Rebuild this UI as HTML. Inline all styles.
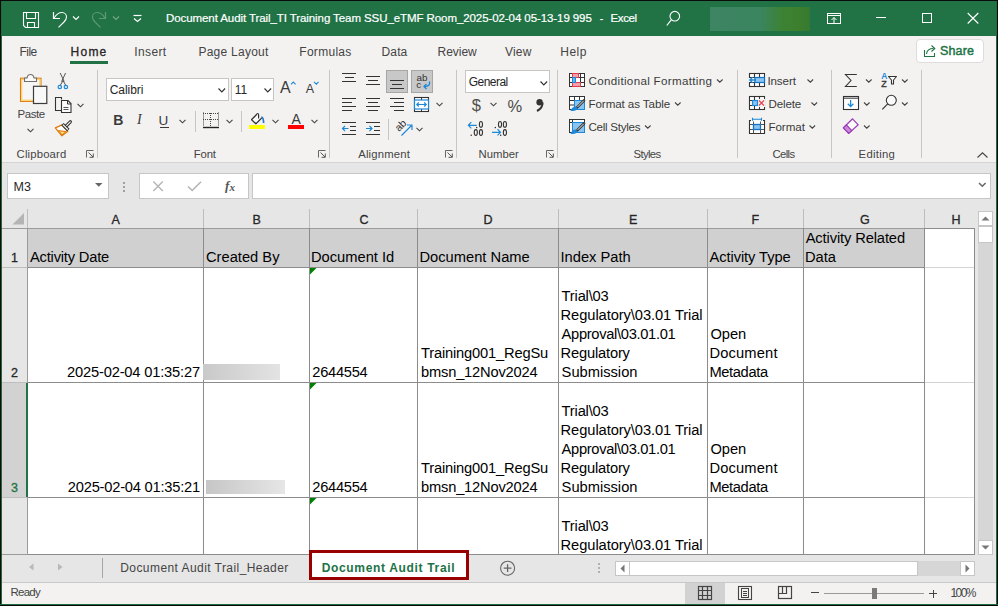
<!DOCTYPE html>
<html><head><meta charset="utf-8"><title>Excel</title>
<style>
*{margin:0;padding:0;box-sizing:border-box}
html,body{width:998px;height:606px;overflow:hidden;background:#f3f2f1;font-family:"Liberation Sans",sans-serif;position:relative}
.a{position:absolute;display:block}
.t{position:absolute;white-space:pre}
.c{-webkit-text-stroke:0.25px #000}
</style></head><body>
<div class="a" style="left:0px;top:0px;width:998px;height:36px;background:#217346;"></div>
<div class="a" style="left:0px;top:0px;width:998px;height:1px;background:#0b0b0b;"></div>
<div class="a" style="left:710px;top:7px;width:100px;height:24px;background:linear-gradient(90deg,#3e8563 0%,#3b8560 50%,#3a8450 58%,#3d8234 72%,#3c7f2e 88%,#367a31 100%);"></div>
<div class="a" style="left:70px;top:61px;width:38px;height:3px;background:#217346;"></div>
<div class="a" style="left:916px;top:39px;width:68px;height:24px;background:#ffffff;border:1px solid #dedcda;border-radius:4px"></div>
<div class="a" style="left:2px;top:162px;width:994px;height:1px;background:#d4d4d4;"></div>
<div class="a" style="left:97px;top:70px;width:1px;height:88px;background:#c8c6c4;"></div>
<div class="a" style="left:329px;top:70px;width:1px;height:88px;background:#c8c6c4;"></div>
<div class="a" style="left:456px;top:70px;width:1px;height:88px;background:#c8c6c4;"></div>
<div class="a" style="left:557px;top:70px;width:1px;height:88px;background:#c8c6c4;"></div>
<div class="a" style="left:737px;top:70px;width:1px;height:88px;background:#c8c6c4;"></div>
<div class="a" style="left:831px;top:70px;width:1px;height:88px;background:#c8c6c4;"></div>
<div class="a" style="left:921px;top:70px;width:1px;height:88px;background:#c8c6c4;"></div>
<div class="a" style="left:106px;top:78px;width:123px;height:23px;background:#ffffff;border:1px solid #c8c6c4;"></div>
<div class="a" style="left:231px;top:78px;width:43px;height:23px;background:#ffffff;border:1px solid #c8c6c4;"></div>
<div class="a" style="left:465px;top:70px;width:85px;height:23px;background:#ffffff;border:1px solid #c8c6c4;"></div>
<div class="a" style="left:2px;top:163px;width:994px;height:392px;background:#e6e6e6;"></div>
<div class="a" style="left:7px;top:173px;width:102px;height:26px;background:#ffffff;border:1px solid #c6c6c6;"></div>
<div class="a" style="left:139px;top:173px;width:110px;height:26px;background:#ffffff;border:1px solid #c6c6c6;"></div>
<div class="a" style="left:252px;top:173px;width:739px;height:26px;background:#ffffff;border:1px solid #c6c6c6;"></div>
<div class="a" style="left:27px;top:209px;width:1px;height:19px;background:#bdbdbd;"></div>
<div class="a" style="left:203px;top:209px;width:1px;height:19px;background:#bdbdbd;"></div>
<div class="a" style="left:309px;top:209px;width:1px;height:19px;background:#bdbdbd;"></div>
<div class="a" style="left:417px;top:209px;width:1px;height:19px;background:#bdbdbd;"></div>
<div class="a" style="left:558px;top:209px;width:1px;height:19px;background:#bdbdbd;"></div>
<div class="a" style="left:707px;top:209px;width:1px;height:19px;background:#bdbdbd;"></div>
<div class="a" style="left:803px;top:209px;width:1px;height:19px;background:#bdbdbd;"></div>
<div class="a" style="left:924px;top:209px;width:1px;height:19px;background:#bdbdbd;"></div>
<div class="a" style="left:2px;top:229px;width:25px;height:325px;background:#e6e6e6;"></div>
<div class="a" style="left:2px;top:383px;width:24px;height:114px;background:#d2d2d2;"></div>
<div class="a" style="left:28px;top:229px;width:946px;height:325px;background:#ffffff;"></div>
<div class="a" style="left:28px;top:229px;width:896px;height:38px;background:#d0d0d0;"></div>
<div class="a" style="left:925px;top:267px;width:49px;height:1px;background:#d4d4d4;"></div>
<div class="a" style="left:925px;top:382px;width:49px;height:1px;background:#d4d4d4;"></div>
<div class="a" style="left:925px;top:497px;width:49px;height:1px;background:#d4d4d4;"></div>
<div class="a" style="left:2px;top:228px;width:973px;height:1px;background:#9b9b9b;"></div>
<div class="a" style="left:2px;top:267px;width:25px;height:1px;background:#bdbdbd;"></div>
<div class="a" style="left:2px;top:382px;width:25px;height:1px;background:#bdbdbd;"></div>
<div class="a" style="left:2px;top:497px;width:25px;height:1px;background:#bdbdbd;"></div>
<div class="a" style="left:2px;top:554px;width:25px;height:1px;background:#9b9b9b;"></div>
<div class="a" style="left:27px;top:267px;width:898px;height:1px;background:#8c8c8c;"></div>
<div class="a" style="left:27px;top:382px;width:898px;height:1px;background:#8c8c8c;"></div>
<div class="a" style="left:27px;top:497px;width:898px;height:1px;background:#8c8c8c;"></div>
<div class="a" style="left:27px;top:554px;width:898px;height:1px;background:#8c8c8c;"></div>
<div class="a" style="left:924px;top:554px;width:51px;height:1px;background:#8c8c8c;"></div>
<div class="a" style="left:203px;top:228px;width:1px;height:327px;background:#8c8c8c;"></div>
<div class="a" style="left:309px;top:228px;width:1px;height:327px;background:#8c8c8c;"></div>
<div class="a" style="left:417px;top:228px;width:1px;height:327px;background:#8c8c8c;"></div>
<div class="a" style="left:558px;top:228px;width:1px;height:327px;background:#8c8c8c;"></div>
<div class="a" style="left:707px;top:228px;width:1px;height:327px;background:#8c8c8c;"></div>
<div class="a" style="left:803px;top:228px;width:1px;height:327px;background:#8c8c8c;"></div>
<div class="a" style="left:924px;top:228px;width:1px;height:327px;background:#8c8c8c;"></div>
<div class="a" style="left:27px;top:228px;width:1px;height:327px;background:#9b9b9b;"></div>
<div class="a" style="left:974px;top:229px;width:1px;height:326px;background:#8c8c8c;"></div>
<div class="a" style="left:924px;top:228px;width:51px;height:1px;background:#8c8c8c;"></div>
<div class="a" style="left:26px;top:383px;width:2px;height:114px;background:#217346;"></div>
<svg class="a" style="left:310px;top:268px;" width="7" height="7" viewBox="0 0 7 7"><path d="M0 0H6.5L0 6.5Z" fill="#008000"/></svg>
<svg class="a" style="left:310px;top:383px;" width="7" height="7" viewBox="0 0 7 7"><path d="M0 0H6.5L0 6.5Z" fill="#008000"/></svg>
<svg class="a" style="left:310px;top:498px;" width="7" height="7" viewBox="0 0 7 7"><path d="M0 0H6.5L0 6.5Z" fill="#008000"/></svg>
<div class="a" style="left:975px;top:209px;width:21px;height:346px;background:#e6e6e6;"></div>
<div class="a" style="left:978px;top:227px;width:15px;height:314px;background:#d6d6d6;"></div>
<div class="a" style="left:978px;top:211px;width:15px;height:15px;background:#ffffff;border:1px solid #c6c6c6;"></div>
<div class="a" style="left:978px;top:226px;width:15px;height:17px;background:#ffffff;border:1px solid #c6c6c6;"></div>
<div class="a" style="left:978px;top:540px;width:15px;height:15px;background:#ffffff;border:1px solid #c6c6c6;"></div>
<div class="a" style="left:2px;top:555px;width:994px;height:27px;background:#e6e6e6;"></div>
<div class="a" style="left:102px;top:558px;width:1px;height:20px;background:#a6a6a6;"></div>
<div class="a" style="left:309px;top:550px;width:160px;height:30px;background:#990000;"></div>
<div class="a" style="left:312px;top:553px;width:154px;height:24px;background:#ffffff;"></div>
<div class="a" style="left:598px;top:563px;width:2px;height:2px;background:#b0b0b0;"></div>
<div class="a" style="left:598px;top:567px;width:2px;height:2px;background:#b0b0b0;"></div>
<div class="a" style="left:598px;top:571px;width:2px;height:2px;background:#b0b0b0;"></div>
<div class="a" style="left:918px;top:561px;width:43px;height:15px;background:#d6d6d6;"></div>
<div class="a" style="left:615px;top:561px;width:15px;height:15px;background:#ffffff;border:1px solid #c6c6c6;"></div>
<div class="a" style="left:629px;top:561px;width:289px;height:15px;background:#ffffff;border:1px solid #c6c6c6;"></div>
<div class="a" style="left:960px;top:561px;width:15px;height:15px;background:#ffffff;border:1px solid #c6c6c6;"></div>
<div class="a" style="left:2px;top:582px;width:994px;height:1px;background:#c8c8c8;"></div>
<div class="a" style="left:2px;top:583px;width:994px;height:21px;background:#f3f2f1;"></div>
<div class="a" style="left:685px;top:583px;width:40px;height:21px;background:#d2d2d2;"></div>
<div class="a" style="left:824px;top:593px;width:100px;height:1px;background:#9a9a9a;"></div>
<div class="a" style="left:872px;top:588px;width:5px;height:11px;background:#7a7a7a;"></div>
<div class="a" style="left:811px;top:592px;width:8px;height:1px;background:#444;"></div>
<div class="a" style="left:929px;top:593px;width:8px;height:1px;background:#444;"></div>
<div class="a" style="left:932.5px;top:589.5px;width:1px;height:8px;background:#444;"></div>
<svg class="a" style="left:20px;top:10px;" width="22" height="22" viewBox="0 0 22 22"><path d="M3.5 2.5H18.5V17.5H5.5L3.5 15.5Z M6.5 2.5V8.5H15.5V2.5 M7.5 17.5V12.5H14.5V17.5" fill="none" stroke="#fff" stroke-width="1.1"/></svg>
<svg class="a" style="left:50px;top:10px;" width="22" height="22" viewBox="0 0 22 22"><path d="M3.5 2V8.5H10" fill="none" stroke="#fff" stroke-width="1.2"/><path d="M4 8.2Q7.5 2.5 12 2.5C15 2.5 16.5 5 16.5 7C16.5 9 15.5 10.5 14 12L8.5 17.4" fill="none" stroke="#fff" stroke-width="1.1"/></svg>
<svg class="a" style="left:72px;top:15px;" width="9" height="6" viewBox="0 0 9 6"><path d="M1 1.5L4 4.5L7 1.5" fill="none" stroke="#fff" stroke-width="1.1"/></svg>
<svg class="a" style="left:87px;top:10px;" width="22" height="22" viewBox="0 0 22 22"><g transform="translate(22,0) scale(-1,1)"><path d="M3.5 2V8.5H10" fill="none" stroke="#5f9a78" stroke-width="1.2"/><path d="M4 8.2Q7.5 2.5 12 2.5C15 2.5 16.5 5 16.5 7C16.5 9 15.5 10.5 14 12L8.5 17.4" fill="none" stroke="#5f9a78" stroke-width="1.1"/></g></svg>
<svg class="a" style="left:112px;top:15px;" width="9" height="6" viewBox="0 0 9 6"><path d="M1 1.5L4 4.5L7 1.5" fill="none" stroke="#76a88b" stroke-width="1.1"/></svg>
<svg class="a" style="left:131px;top:13px;" width="12" height="11" viewBox="0 0 12 11"><path d="M2.5 2.5H10.5" stroke="#fff" stroke-width="1.2"/><path d="M3 5.5L6.5 8.5L10 5.5" fill="none" stroke="#fff" stroke-width="1.2"/></svg>
<svg class="a" style="left:664px;top:8px;" width="18" height="20" viewBox="0 0 18 20"><circle cx="10.8" cy="8.2" r="4.8" fill="none" stroke="#fff" stroke-width="1.1"/><path d="M7.3 11.8L2.8 17.5" stroke="#fff" stroke-width="1.2"/></svg>
<svg class="a" style="left:826px;top:11px;" width="17" height="14" viewBox="0 0 17 14"><rect x="1.5" y="2.5" width="13" height="10" fill="none" stroke="#fff" stroke-width="1"/><path d="M1.5 4.5H14.5" stroke="#fff" stroke-width="1"/><path d="M8 12V6.5 M5.5 9L8 6.5L10.5 9" fill="none" stroke="#fff" stroke-width="1"/></svg>
<svg class="a" style="left:875px;top:15px;" width="12" height="5" viewBox="0 0 12 5"><path d="M1 2.5H11" stroke="#fff" stroke-width="1"/></svg>
<svg class="a" style="left:920px;top:11px;" width="14" height="14" viewBox="0 0 14 14"><rect x="2.5" y="2.5" width="9" height="9" fill="none" stroke="#fff" stroke-width="1"/></svg>
<svg class="a" style="left:966px;top:11px;" width="14" height="14" viewBox="0 0 14 14"><path d="M1.7 2L12.3 12.5M12.3 2L1.7 12.5" stroke="#fff" stroke-width="1.1"/></svg>
<svg class="a" style="left:922px;top:43px;" width="16" height="16" viewBox="0 0 16 16"><path d="M2.5 7V13.5H12.5V10" fill="none" stroke="#217346" stroke-width="1.1"/><path d="M4.5 11C5 6.5 8 5.5 11.5 5.5" fill="none" stroke="#217346" stroke-width="1.1"/><path d="M9.5 2.5L12.8 5.5L9.5 8.5" fill="none" stroke="#217346" stroke-width="1.1"/></svg>
<svg class="a" style="left:14px;top:70px;" width="36" height="36" viewBox="0 0 36 36"><rect x="6.5" y="8.2" width="20.5" height="23.2" fill="#f6f6f6" stroke="#e07a10" stroke-width="1.1"/><rect x="7.7" y="9.4" width="18.1" height="20.8" fill="none" stroke="#fbd46c" stroke-width="1.2"/><path d="M10.5 11.5V8H13Q13.5 4.5 16.5 4.5Q19.5 4.5 20 8H22.5V11.5Z" fill="#fafafa" stroke="#6f6f6f" stroke-width="1.1"/><rect x="19.5" y="16.3" width="13.3" height="17.2" fill="#f8f8f8" stroke="#3c3c3c" stroke-width="1.2"/></svg>
<svg class="a" style="left:26px;top:127px;" width="9" height="7" viewBox="0 0 9 7"><path d="M1.5 1.8L4.5 4.8L7.5 1.8" fill="none" stroke="#444" stroke-width="1.1"/></svg>
<svg class="a" style="left:56px;top:72px;" width="14" height="18" viewBox="0 0 14 18"><path d="M4.2 1L8.2 9.5M9.6 1L5.6 9.5M7 8.5L4.3 13.3M7 8.5L9.7 13.3" stroke="#555" stroke-width="1" fill="none"/><circle cx="3.8" cy="15" r="1.7" fill="none" stroke="#1e88d8" stroke-width="1.2"/><circle cx="9.9" cy="15" r="1.7" fill="none" stroke="#1e88d8" stroke-width="1.2"/></svg>
<svg class="a" style="left:54px;top:96px;" width="20" height="18" viewBox="0 0 20 18"><path d="M7.5 3.5V1.5H1.5V14.5H7" fill="none" stroke="#333" stroke-width="1.1"/><path d="M7.5 4.5H14L17 7.5V16.5H7.5Z" fill="#fafafa" stroke="#333" stroke-width="1.1"/><path d="M13.5 4.5V8H17" fill="none" stroke="#333" stroke-width="1"/><path d="M9.5 11.5H14.5M9.5 13.5H14.5" stroke="#555" stroke-width="1"/></svg>
<svg class="a" style="left:76px;top:102px;" width="9" height="7" viewBox="0 0 9 7"><path d="M1.5 1.8L4.5 4.8L7.5 1.8" fill="none" stroke="#444" stroke-width="1.1"/></svg>
<svg class="a" style="left:52px;top:118px;" width="22" height="20" viewBox="0 0 22 20"><path d="M3.3 9.9L10 6.8L15.8 13.2L9.9 17.8Z" fill="#fff" stroke="#e07a10" stroke-width="1.3" stroke-linejoin="round"/><path d="M6.5 12.6L14 13.6L10 17Z" fill="#fbd46c" stroke="#e07a10" stroke-width="1"/><path d="M13.6 8.7L18.3 3.8" stroke="#333" stroke-width="3.3" stroke-linecap="round"/><path d="M13.6 8.7L18.3 3.8" stroke="#fff" stroke-width="1.1" stroke-linecap="round"/><path d="M10.4 6.1L16.3 12" stroke="#333" stroke-width="3.4"/><path d="M10.9 6.6L15.8 11.5" stroke="#fff" stroke-width="1.2"/></svg>
<svg class="a" style="left:85px;top:149px;" width="10" height="10" viewBox="0 0 10 10"><path d="M1.5 8.5V1.5H8.5" fill="none" stroke="#666" stroke-width="1"/><path d="M3.5 3.5L8 8M8.3 4.5V8.3H4.5" fill="none" stroke="#555" stroke-width="1"/></svg>
<svg class="a" style="left:317px;top:149px;" width="10" height="10" viewBox="0 0 10 10"><path d="M1.5 8.5V1.5H8.5" fill="none" stroke="#666" stroke-width="1"/><path d="M3.5 3.5L8 8M8.3 4.5V8.3H4.5" fill="none" stroke="#555" stroke-width="1"/></svg>
<svg class="a" style="left:444px;top:149px;" width="10" height="10" viewBox="0 0 10 10"><path d="M1.5 8.5V1.5H8.5" fill="none" stroke="#666" stroke-width="1"/><path d="M3.5 3.5L8 8M8.3 4.5V8.3H4.5" fill="none" stroke="#555" stroke-width="1"/></svg>
<svg class="a" style="left:545px;top:149px;" width="10" height="10" viewBox="0 0 10 10"><path d="M1.5 8.5V1.5H8.5" fill="none" stroke="#666" stroke-width="1"/><path d="M3.5 3.5L8 8M8.3 4.5V8.3H4.5" fill="none" stroke="#555" stroke-width="1"/></svg>
<svg class="a" style="left:216px;top:85px;" width="12" height="10" viewBox="0 0 12 10"><path d="M2.5 3.5L5.8 6.8L9.1 3.5" fill="none" stroke="#333" stroke-width="1.2"/></svg>
<svg class="a" style="left:262px;top:85px;" width="12" height="10" viewBox="0 0 12 10"><path d="M2.5 3.5L5.8 6.8L9.1 3.5" fill="none" stroke="#333" stroke-width="1.2"/></svg>
<svg class="a" style="left:290px;top:80px;" width="7" height="6" viewBox="0 0 7 6"><path d="M1 4.3L3.3 2L5.6 4.3" fill="none" stroke="#1e88d8" stroke-width="1.1"/></svg>
<svg class="a" style="left:313px;top:80px;" width="7" height="6" viewBox="0 0 7 6"><path d="M1 1.8L3.3 4.1L5.6 1.8" fill="none" stroke="#1e88d8" stroke-width="1.1"/></svg>
<div class="a" style="left:159.6px;top:126.5px;width:9.6px;height:1px;background:#3a3a3a;"></div>
<svg class="a" style="left:178px;top:118px;" width="9" height="7" viewBox="0 0 9 7"><path d="M1.5 1.8L4.5 4.8L7.5 1.8" fill="none" stroke="#444" stroke-width="1.1"/></svg>
<svg class="a" style="left:224.5px;top:118px;" width="9" height="7" viewBox="0 0 9 7"><path d="M1.5 1.8L4.5 4.8L7.5 1.8" fill="none" stroke="#444" stroke-width="1.1"/></svg>
<svg class="a" style="left:271px;top:118px;" width="9" height="7" viewBox="0 0 9 7"><path d="M1.5 1.8L4.5 4.8L7.5 1.8" fill="none" stroke="#444" stroke-width="1.1"/></svg>
<svg class="a" style="left:309.5px;top:118px;" width="9" height="7" viewBox="0 0 9 7"><path d="M1.5 1.8L4.5 4.8L7.5 1.8" fill="none" stroke="#444" stroke-width="1.1"/></svg>
<div class="a" style="left:195px;top:111px;width:1px;height:21px;background:#c8c6c4;"></div>
<div class="a" style="left:241px;top:111px;width:1px;height:21px;background:#c8c6c4;"></div>
<svg class="a" style="left:202px;top:112px;" width="18" height="18" viewBox="0 0 18 18"><path d="M1.5 0.5V14.5M16.5 0.5V14.5M1 1.5H16.5M8.5 1V14.5M1 7.5H16.5" fill="none" stroke="#444" stroke-width="1" stroke-dasharray="1 1"/><path d="M1 15.5H17" stroke="#222" stroke-width="1.4"/></svg>
<svg class="a" style="left:248px;top:112px;" width="18" height="14" viewBox="0 0 18 14"><path d="M13.5 6.2L8 11.7L3.6 7.6L8.3 3" fill="#fafafa" stroke="#333" stroke-width="1.2" stroke-linejoin="round"/><path d="M8.3 3L13.5 6.2L8 11.7L3.6 7.6Z" fill="#fafafa"/><path d="M13.5 6.2L8 11.7L3.6 7.6L8.3 3" fill="none" stroke="#333" stroke-width="1.2" stroke-linejoin="round"/><path d="M10.6 6.6V3Q10.6 1.5 9.6 1.5Q8.8 1.5 8.3 3" fill="none" stroke="#333" stroke-width="1.2"/><path d="M13.3 5Q15.6 5.3 15.6 11" fill="none" stroke="#1e78c8" stroke-width="1.7"/></svg>
<div class="a" style="left:248.8px;top:125px;width:16.2px;height:4px;background:#ffff00;"></div>
<div class="a" style="left:288px;top:125px;width:16px;height:4px;background:#ff0000;"></div>
<div class="a" style="left:342.2px;top:73px;width:13.600000000000023px;height:1.1px;background:#333;"></div>
<div class="a" style="left:344.5px;top:77px;width:9.199999999999989px;height:1.1px;background:#333;"></div>
<div class="a" style="left:342.2px;top:81px;width:13.600000000000023px;height:1.1px;background:#333;"></div>
<div class="a" style="left:366.1px;top:76px;width:13.699999999999989px;height:1.1px;background:#333;"></div>
<div class="a" style="left:368.3px;top:80px;width:9.5px;height:1.1px;background:#333;"></div>
<div class="a" style="left:366.1px;top:84px;width:13.699999999999989px;height:1.1px;background:#333;"></div>
<div class="a" style="left:386px;top:70px;width:22px;height:23px;background:#c8c8c8;border:1px solid #a6a6a6;"></div>
<div class="a" style="left:390px;top:80px;width:13.899999999999977px;height:1.1px;background:#333;"></div>
<div class="a" style="left:392.4px;top:84px;width:9.5px;height:1.1px;background:#333;"></div>
<div class="a" style="left:390px;top:88px;width:13.899999999999977px;height:1.1px;background:#333;"></div>
<div class="a" style="left:411px;top:70px;width:22px;height:23px;background:#c8c8c8;border:1px solid #a6a6a6;"></div>
<svg class="a" style="left:420px;top:79px;" width="12" height="11" viewBox="0 0 12 11"><path d="M9.5 2.5Q10.5 7.5 4.5 7.5" fill="none" stroke="#1e88d8" stroke-width="1.3"/><path d="M6.5 5L4 7.5L6.5 10" fill="none" stroke="#1e88d8" stroke-width="1.3"/></svg>
<div class="a" style="left:342.2px;top:98px;width:13.600000000000023px;height:1.1px;background:#333;"></div>
<div class="a" style="left:342.2px;top:102px;width:9.800000000000011px;height:1.1px;background:#333;"></div>
<div class="a" style="left:342.2px;top:106px;width:13.600000000000023px;height:1.1px;background:#333;"></div>
<div class="a" style="left:342.2px;top:110px;width:9.800000000000011px;height:1.1px;background:#333;"></div>
<div class="a" style="left:366.1px;top:98px;width:13.699999999999989px;height:1.1px;background:#333;"></div>
<div class="a" style="left:367.9px;top:102px;width:10.200000000000045px;height:1.1px;background:#333;"></div>
<div class="a" style="left:366.1px;top:106px;width:13.699999999999989px;height:1.1px;background:#333;"></div>
<div class="a" style="left:367.9px;top:110px;width:10.200000000000045px;height:1.1px;background:#333;"></div>
<div class="a" style="left:390px;top:98px;width:13.899999999999977px;height:1.1px;background:#333;"></div>
<div class="a" style="left:394px;top:102px;width:9.899999999999977px;height:1.1px;background:#333;"></div>
<div class="a" style="left:390px;top:106px;width:13.899999999999977px;height:1.1px;background:#333;"></div>
<div class="a" style="left:394px;top:110px;width:9.899999999999977px;height:1.1px;background:#333;"></div>
<svg class="a" style="left:413px;top:96px;" width="17" height="17" viewBox="0 0 17 17"><rect x="1.5" y="1.5" width="14" height="14" fill="#fff" stroke="#333" stroke-width="1.1"/><path d="M8.5 1.5V15.5" stroke="#333" stroke-width="1"/><rect x="1.5" y="4" width="14" height="9" fill="#fff" stroke="#1e88d8" stroke-width="1.2"/><path d="M3.8 8.5H13.2M5.8 6.5L3.8 8.5L5.8 10.5M11.2 6.5L13.2 8.5L11.2 10.5" fill="none" stroke="#1e88d8" stroke-width="1.2"/></svg>
<svg class="a" style="left:435px;top:101px;" width="9" height="7" viewBox="0 0 9 7"><path d="M1.5 1.8L4.5 4.8L7.5 1.8" fill="none" stroke="#444" stroke-width="1.1"/></svg>
<div class="a" style="left:342.2px;top:122px;width:13.600000000000023px;height:1.1px;background:#333;"></div>
<div class="a" style="left:349.9px;top:126px;width:5.900000000000034px;height:1.1px;background:#333;"></div>
<div class="a" style="left:349.9px;top:130px;width:5.900000000000034px;height:1.1px;background:#333;"></div>
<div class="a" style="left:342.2px;top:134px;width:13.600000000000023px;height:1.1px;background:#333;"></div>
<div class="a" style="left:366.1px;top:122px;width:13.699999999999989px;height:1.1px;background:#333;"></div>
<div class="a" style="left:374.2px;top:126px;width:5.600000000000023px;height:1.1px;background:#333;"></div>
<div class="a" style="left:374.2px;top:130px;width:5.600000000000023px;height:1.1px;background:#333;"></div>
<div class="a" style="left:366.1px;top:134px;width:13.699999999999989px;height:1.1px;background:#333;"></div>
<svg class="a" style="left:341px;top:124px;" width="9" height="9" viewBox="0 0 9 9"><path d="M1.5 4.5H7.5M4 2L1.5 4.5L4 7" fill="none" stroke="#1e88d8" stroke-width="1.2"/></svg>
<svg class="a" style="left:365px;top:124px;" width="9" height="9" viewBox="0 0 9 9"><path d="M1 4.5H7M4.5 2L7 4.5L4.5 7" fill="none" stroke="#1e88d8" stroke-width="1.2"/></svg>
<div class="a" style="left:388px;top:119px;width:1px;height:21px;background:#c8c6c4;"></div>
<svg class="a" style="left:400px;top:122px;" width="14" height="15" viewBox="0 0 14 15"><path d="M1.5 13.5L11.5 3.5M7 3H12V8" fill="none" stroke="#1e88d8" stroke-width="1.2"/></svg>
<svg class="a" style="left:415px;top:126px;" width="9" height="7" viewBox="0 0 9 7"><path d="M1.5 1.8L4.5 4.8L7.5 1.8" fill="none" stroke="#444" stroke-width="1.1"/></svg>
<svg class="a" style="left:538px;top:78px;" width="12" height="10" viewBox="0 0 12 10"><path d="M2.5 3.5L5.8 6.8L9.1 3.5" fill="none" stroke="#333" stroke-width="1.2"/></svg>
<svg class="a" style="left:489px;top:101px;" width="9" height="7" viewBox="0 0 9 7"><path d="M1.5 1.8L4.5 4.8L7.5 1.8" fill="none" stroke="#444" stroke-width="1.1"/></svg>
<svg class="a" style="left:534px;top:98px;" width="11" height="15" viewBox="0 0 11 15"><circle cx="5.6" cy="4.2" r="3.2" fill="#333"/><path d="M8.6 4.5Q8.8 10 3 13" fill="none" stroke="#333" stroke-width="2"/></svg>
<svg class="a" style="left:462px;top:116px;" width="50" height="24" viewBox="0 0 50 24"><ellipse cx="18.94999999999999" cy="8.400000000000006" rx="1.55" ry="2.9" fill="none" stroke="#333" stroke-width="1.1"/><rect x="14" y="10.900000000000006" width="1.3" height="1.3" fill="#333"/><ellipse cx="13.800000000000011" cy="16.55000000000001" rx="1.55" ry="2.9" fill="none" stroke="#333" stroke-width="1.1"/><ellipse cx="18.94999999999999" cy="16.55000000000001" rx="1.55" ry="2.9" fill="none" stroke="#333" stroke-width="1.1"/><rect x="8.600000000000023" y="18.599999999999994" width="1.3" height="1.3" fill="#333"/><ellipse cx="38" cy="8.400000000000006" rx="1.55" ry="2.9" fill="none" stroke="#333" stroke-width="1.1"/><ellipse cx="42.89999999999998" cy="8.400000000000006" rx="1.55" ry="2.9" fill="none" stroke="#333" stroke-width="1.1"/><rect x="32.69999999999999" y="10.900000000000006" width="1.3" height="1.3" fill="#333"/><ellipse cx="42.89999999999998" cy="16.55000000000001" rx="1.55" ry="2.9" fill="none" stroke="#333" stroke-width="1.1"/><rect x="38" y="18.599999999999994" width="1.3" height="1.3" fill="#333"/><path d="M6.3 9.3H14.8M9.3 6.2L6.3 9.3L9.3 12.4" fill="none" stroke="#1e88d8" stroke-width="1.2"/><path d="M30 16.3H38.5M35.5 13.2L38.5 16.3L35.5 19.4" fill="none" stroke="#1e88d8" stroke-width="1.2"/></svg>
<svg class="a" style="left:568px;top:72px;" width="18" height="17" viewBox="0 0 18 17"><rect x="1.5" y="1.5" width="15" height="13" fill="#fff" stroke="#333" stroke-width="1"/><path d="M1.5 5.5H16.5M1.5 10.5H16.5M12.5 1.5V14.5M4.5 1.5V14.5" stroke="#333" stroke-width="1"/><rect x="4.5" y="1.5" width="6" height="4" fill="#f4a0a8" stroke="#e03c4c" stroke-width="1"/><rect x="4.5" y="10.5" width="8" height="4" fill="#f4a0a8" stroke="#e03c4c" stroke-width="1"/><rect x="4.5" y="5.5" width="3" height="5" fill="#6fb1ea" stroke="#1e88d8" stroke-width="1"/></svg>
<svg class="a" style="left:716px;top:78px;" width="8" height="6" viewBox="0 0 8 6"><path d="M1 1.5L3.8 4.2L6.6 1.5" fill="none" stroke="#444" stroke-width="1.1"/></svg>
<svg class="a" style="left:568px;top:95px;" width="18" height="17" viewBox="0 0 18 17"><rect x="1.5" y="1.5" width="15" height="13" fill="#fff" stroke="#333" stroke-width="1"/><path d="M1.5 5.5H16.5M1.5 10H16.5M6.5 1.5V14.5M11.5 1.5V14.5" stroke="#333" stroke-width="1"/><rect x="6.5" y="5.5" width="10" height="9" fill="#8cc4f0" stroke="#1e88d8" stroke-width="1"/><path d="M16 5.5L9.2 12.3" stroke="#333" stroke-width="2.6" stroke-linecap="round"/><path d="M15.8 5.7L9.6 11.9" stroke="#fff" stroke-width="0.9"/><path d="M2.5 15.8C3.5 13 5.5 11.3 8 11.6L9.3 13C9.2 15.5 6 16.6 2.5 15.8Z" fill="#1e88d8"/></svg>
<svg class="a" style="left:674px;top:101px;" width="8" height="6" viewBox="0 0 8 6"><path d="M1 1.5L3.8 4.2L6.6 1.5" fill="none" stroke="#444" stroke-width="1.1"/></svg>
<svg class="a" style="left:568px;top:118px;" width="18" height="17" viewBox="0 0 18 17"><rect x="1.5" y="1.5" width="15" height="13" fill="#fff" stroke="#333" stroke-width="1"/><path d="M1.5 4.5H16.5M4.5 1.5V14.5" stroke="#333" stroke-width="1"/><rect x="4.5" y="4.5" width="12" height="10" fill="#8cc4f0" stroke="#1e88d8" stroke-width="1"/><path d="M16 5.5L9.2 12.3" stroke="#333" stroke-width="2.6" stroke-linecap="round"/><path d="M15.8 5.7L9.6 11.9" stroke="#fff" stroke-width="0.9"/><path d="M2.5 15.8C3.5 13 5.5 11.3 8 11.6L9.3 13C9.2 15.5 6 16.6 2.5 15.8Z" fill="#1e88d8"/></svg>
<svg class="a" style="left:644px;top:124px;" width="8" height="6" viewBox="0 0 8 6"><path d="M1 1.5L3.8 4.2L6.6 1.5" fill="none" stroke="#444" stroke-width="1.1"/></svg>
<svg class="a" style="left:748px;top:72px;" width="18" height="16" viewBox="0 0 18 16"><rect x="1.5" y="1.5" width="15" height="13" fill="#fff" stroke="#333" stroke-width="1.1"/><path d="M6.5 1.5V14.5M11.5 1.5V14.5M1.5 5.5H16.5M1.5 10.5H16.5" stroke="#333" stroke-width="1.1"/><rect x="0.8" y="6" width="6" height="4" fill="#fff"/><rect x="7" y="5.5" width="9.5" height="5" fill="#8cc4f0" stroke="#1673c6" stroke-width="1.2"/><path d="M1.8 8H8M4.6 5.2L1.8 8L4.6 10.8" fill="none" stroke="#1e88d8" stroke-width="1.3"/></svg>
<svg class="a" style="left:806px;top:78px;" width="9" height="6" viewBox="0 0 9 6"><path d="M1.5 1.5L4.3 4.2L7.1 1.5" fill="none" stroke="#444" stroke-width="1.1"/></svg>
<svg class="a" style="left:748px;top:95px;" width="18" height="16" viewBox="0 0 18 16"><rect x="1.5" y="1.5" width="15" height="13" fill="#fff" stroke="#333" stroke-width="1.1"/><path d="M6.5 1.5V14.5M11.5 1.5V14.5M1.5 5.5H16.5M1.5 10.5H16.5" stroke="#333" stroke-width="1.1"/><rect x="10" y="4" width="7" height="8" fill="#f3f2f1"/><rect x="4.5" y="5.5" width="5" height="5" fill="#8cc4f0" stroke="#1e88d8" stroke-width="1.2"/><path d="M11 5.5L16 10.5M16 5.5L11 10.5" stroke="#e8434f" stroke-width="1.2"/></svg>
<svg class="a" style="left:810px;top:101px;" width="9" height="6" viewBox="0 0 9 6"><path d="M1.5 1.5L4.3 4.2L7.1 1.5" fill="none" stroke="#444" stroke-width="1.1"/></svg>
<svg class="a" style="left:748px;top:117px;" width="18" height="18" viewBox="0 0 18 18"><rect x="1.5" y="3.5" width="15" height="13" fill="#fff"/><path d="M5.5 4.5V16.5M12.5 4.5V16.5M1.5 7.5H16.5M1.5 12.5H16.5" stroke="#555" stroke-width="1"/><path d="M3 3.5H1.5V16.5H16.5V3.5H15" fill="none" stroke="#333" stroke-width="1.1"/><rect x="5.5" y="7.5" width="7" height="5" fill="#8cc4f0" stroke="#1673c6" stroke-width="1.3"/><path d="M4.3 2.3H13.7M4.5 0.8V3.8M13.5 0.8V3.8" stroke="#1e88d8" stroke-width="1.1"/></svg>
<svg class="a" style="left:808px;top:124px;" width="9" height="6" viewBox="0 0 9 6"><path d="M1.5 1.5L4.3 4.2L7.1 1.5" fill="none" stroke="#444" stroke-width="1.1"/></svg>
<svg class="a" style="left:843px;top:72px;" width="16" height="17" viewBox="0 0 16 17"><path d="M13.8 2.5H2.5L8 8.5L2.5 14.5H13.8" fill="none" stroke="#333" stroke-width="1.1"/></svg>
<svg class="a" style="left:865px;top:78px;" width="8" height="6" viewBox="0 0 8 6"><path d="M1 1.5L3.8 4.2L6.6 1.5" fill="none" stroke="#444" stroke-width="1.1"/></svg>
<svg class="a" style="left:887px;top:75px;" width="11" height="11" viewBox="0 0 11 11"><path d="M1.5 1.5H9.5L6.5 5V9H4.5V5Z" fill="#fff" stroke="#333" stroke-width="1.1" stroke-linejoin="round"/></svg>
<svg class="a" style="left:901px;top:78px;" width="8" height="6" viewBox="0 0 8 6"><path d="M1 1.5L3.8 4.2L6.6 1.5" fill="none" stroke="#444" stroke-width="1.1"/></svg>
<svg class="a" style="left:842px;top:95px;" width="18" height="16" viewBox="0 0 18 16"><rect x="1.5" y="1.5" width="15" height="13" fill="#fff" stroke="#333" stroke-width="1.1"/><path d="M1.5 3.2H16.5" stroke="#333" stroke-width="1"/><path d="M8.6 5V11.5M5.8 8.8L8.6 11.6L11.4 8.8" fill="none" stroke="#1e88d8" stroke-width="1.3"/></svg>
<svg class="a" style="left:863px;top:101px;" width="8" height="6" viewBox="0 0 8 6"><path d="M1 1.5L3.8 4.2L6.6 1.5" fill="none" stroke="#444" stroke-width="1.1"/></svg>
<svg class="a" style="left:880px;top:94px;" width="18" height="18" viewBox="0 0 18 18"><circle cx="11.3" cy="6.3" r="5" fill="#fafafa" stroke="#333" stroke-width="1.1"/><path d="M7.7 9.9L2.3 15.3" stroke="#333" stroke-width="1.2"/></svg>
<svg class="a" style="left:901px;top:101px;" width="8" height="6" viewBox="0 0 8 6"><path d="M1 1.5L3.8 4.2L6.6 1.5" fill="none" stroke="#444" stroke-width="1.1"/></svg>
<svg class="a" style="left:842px;top:117px;" width="18" height="18" viewBox="0 0 18 18"><path d="M10.6 1.8L16.2 7.8L6.7 16.4L1.4 10.8Z" fill="#fafafa" stroke="#9b3bb8" stroke-width="1.2" stroke-linejoin="round"/><path d="M1.4 10.8L4.4 7.8L9.8 13.6L6.7 16.4Z" fill="#c98ad9" stroke="#9b3bb8" stroke-width="1.2" stroke-linejoin="round"/></svg>
<svg class="a" style="left:863px;top:124px;" width="8" height="6" viewBox="0 0 8 6"><path d="M1 1.5L3.8 4.2L6.6 1.5" fill="none" stroke="#444" stroke-width="1.1"/></svg>
<svg class="a" style="left:976px;top:151px;" width="13" height="8" viewBox="0 0 13 8"><path d="M1.5 6.5L6.5 1.8L11.5 6.5" fill="none" stroke="#444" stroke-width="1.1"/></svg>
<svg class="a" style="left:94px;top:182px;" width="10" height="6" viewBox="0 0 10 6"><path d="M1 1H8.5L4.75 4.8Z" fill="#666"/></svg>
<div class="a" style="left:123px;top:181.5px;width:2px;height:2px;background:#a0a0a0;"></div>
<div class="a" style="left:123px;top:185.5px;width:2px;height:2px;background:#a0a0a0;"></div>
<div class="a" style="left:123px;top:189.5px;width:2px;height:2px;background:#a0a0a0;"></div>
<svg class="a" style="left:151px;top:179px;" width="14" height="14" viewBox="0 0 14 14"><path d="M2.3 2.5L11.8 12M11.8 2.5L2.3 12" stroke="#b4b4b4" stroke-width="1.3"/></svg>
<svg class="a" style="left:186px;top:179px;" width="17" height="14" viewBox="0 0 17 14"><path d="M2 7.5L6.2 11.5L15 2.8" fill="none" stroke="#b4b4b4" stroke-width="1.6"/></svg>
<svg class="a" style="left:977px;top:181px;" width="11" height="8" viewBox="0 0 11 8"><path d="M2 2L5.3 5.3L8.6 2" fill="none" stroke="#666" stroke-width="1.5"/></svg>
<svg class="a" style="left:12px;top:212px;" width="14" height="14" viewBox="0 0 14 14"><path d="M12 1V12.5H0.5Z" fill="#b4b4b4"/></svg>
<svg class="a" style="left:978px;top:211px;" width="15" height="15" viewBox="0 0 15 15"><path d="M3.5 9.5H11.5L7.5 5.5Z" fill="#777"/></svg>
<svg class="a" style="left:978px;top:540px;" width="15" height="15" viewBox="0 0 15 15"><path d="M3.5 5.5H11.5L7.5 9.5Z" fill="#777"/></svg>
<svg class="a" style="left:615px;top:561px;" width="15" height="15" viewBox="0 0 15 15"><path d="M9.5 3.5V11.5L5.5 7.5Z" fill="#777"/></svg>
<svg class="a" style="left:960px;top:561px;" width="15" height="15" viewBox="0 0 15 15"><path d="M5.5 3.5V11.5L9.5 7.5Z" fill="#777"/></svg>
<svg class="a" style="left:26px;top:561px;" width="10" height="12" viewBox="0 0 10 12"><path d="M7.5 2.5V9.5L3 6Z" fill="#b8b8b8"/></svg>
<svg class="a" style="left:55px;top:561px;" width="10" height="12" viewBox="0 0 10 12"><path d="M3 2.5V9.5L7.5 6Z" fill="#b8b8b8"/></svg>
<svg class="a" style="left:499px;top:559px;" width="19" height="19" viewBox="0 0 19 19"><circle cx="8.6" cy="9.2" r="7" fill="none" stroke="#666" stroke-width="1.1"/><path d="M8.6 5.3V13.1M4.7 9.2H12.5" stroke="#666" stroke-width="1.3"/></svg>
<svg class="a" style="left:697px;top:585px;" width="16" height="16" viewBox="0 0 16 16"><rect x="1.5" y="1.5" width="13" height="13" fill="none" stroke="#444" stroke-width="1.2"/><path d="M5.5 1.5V14.5M10.5 1.5V14.5M1.5 5.5H14.5M1.5 10.5H14.5" stroke="#444" stroke-width="1.2"/></svg>
<svg class="a" style="left:737px;top:585px;" width="16" height="16" viewBox="0 0 16 16"><rect x="1.5" y="1.5" width="13" height="13" fill="none" stroke="#444" stroke-width="1.1"/><rect x="4.5" y="3.5" width="7" height="9" fill="none" stroke="#444" stroke-width="1"/><path d="M6 6.5H10M6 8.5H10M6 10.5H10" stroke="#444" stroke-width="1"/></svg>
<svg class="a" style="left:777px;top:585px;" width="16" height="16" viewBox="0 0 16 16"><rect x="1.5" y="1.5" width="13" height="12" fill="none" stroke="#444" stroke-width="1.2"/><path d="M5.5 1.5V8.5M9.5 1.5V8.5H1.5" fill="none" stroke="#444" stroke-width="1.2"/></svg>
<div class="t" style="left:166.00px;top:13px;font-size:11.5px;line-height:11.5px;font-weight:normal;color:#ffffff;letter-spacing:-0.082px;-webkit-text-stroke:0.2px #fff">Document Audit Trail_TI Training Team SSU_eTMF Room_2025-02-04 05-13-19 995</div>
<div class="t" style="left:599.50px;top:13px;font-size:12px;line-height:12px;font-weight:normal;color:#ffffff;letter-spacing:0.000px;">-</div>
<div class="t" style="left:610.60px;top:13px;font-size:11.5px;line-height:11.5px;font-weight:normal;color:#ffffff;letter-spacing:-0.417px;-webkit-text-stroke:0.2px #fff">Excel</div>
<div class="t" style="left:19.50px;top:46px;font-size:12px;line-height:12px;font-weight:normal;color:#444444;letter-spacing:-0.554px;">File</div>
<div class="t" style="left:134.30px;top:46px;font-size:12px;line-height:12px;font-weight:normal;color:#444444;letter-spacing:0.364px;">Insert</div>
<div class="t" style="left:198.40px;top:46px;font-size:12px;line-height:12px;font-weight:normal;color:#444444;letter-spacing:0.255px;">Page Layout</div>
<div class="t" style="left:299.30px;top:46px;font-size:12px;line-height:12px;font-weight:normal;color:#444444;letter-spacing:0.284px;">Formulas</div>
<div class="t" style="left:381.60px;top:46px;font-size:12px;line-height:12px;font-weight:normal;color:#444444;letter-spacing:0.109px;">Data</div>
<div class="t" style="left:437.60px;top:46px;font-size:12px;line-height:12px;font-weight:normal;color:#444444;letter-spacing:-0.056px;">Review</div>
<div class="t" style="left:505.00px;top:46px;font-size:12px;line-height:12px;font-weight:normal;color:#444444;letter-spacing:0.191px;">View</div>
<div class="t" style="left:560.30px;top:46px;font-size:12px;line-height:12px;font-weight:normal;color:#444444;letter-spacing:0.465px;">Help</div>
<div class="t" style="left:70.60px;top:46px;font-size:12px;line-height:12px;font-weight:normal;color:#262626;letter-spacing:1.221px;-webkit-text-stroke:0.3px #262626">Home</div>
<div class="t" style="left:940.00px;top:45px;font-size:12.5px;line-height:12.5px;font-weight:normal;color:#217346;letter-spacing:0.149px;-webkit-text-stroke:0.45px #217346">Share</div>
<div class="t" style="left:16.60px;top:148.5px;font-size:11.3px;line-height:11.3px;font-weight:normal;color:#444444;letter-spacing:0.166px;">Clipboard</div>
<div class="t" style="left:193.80px;top:148.5px;font-size:11.3px;line-height:11.3px;font-weight:normal;color:#444444;letter-spacing:-0.155px;">Font</div>
<div class="t" style="left:358.20px;top:148.5px;font-size:11.3px;line-height:11.3px;font-weight:normal;color:#444444;letter-spacing:0.188px;">Alignment</div>
<div class="t" style="left:478.50px;top:148.5px;font-size:11.3px;line-height:11.3px;font-weight:normal;color:#444444;letter-spacing:0.017px;">Number</div>
<div class="t" style="left:633.60px;top:148.5px;font-size:11.3px;line-height:11.3px;font-weight:normal;color:#444444;letter-spacing:-0.663px;">Styles</div>
<div class="t" style="left:772.50px;top:148.5px;font-size:11.3px;line-height:11.3px;font-weight:normal;color:#444444;letter-spacing:-0.640px;">Cells</div>
<div class="t" style="left:858.60px;top:148.5px;font-size:11.3px;line-height:11.3px;font-weight:normal;color:#444444;letter-spacing:0.290px;">Editing</div>
<div class="t" style="left:17.50px;top:109px;font-size:11.5px;line-height:11.5px;font-weight:normal;color:#444444;letter-spacing:-0.428px;">Paste</div>
<div class="t" style="left:109.70px;top:84px;font-size:12px;line-height:12px;font-weight:normal;color:#262626;letter-spacing:-0.057px;">Calibri</div>
<div class="t" style="left:234.70px;top:84px;font-size:12px;line-height:12px;font-weight:normal;color:#262626;letter-spacing:0.000px;">11</div>
<div class="t" style="left:468.80px;top:76px;font-size:12px;line-height:12px;font-weight:normal;color:#262626;letter-spacing:-0.554px;">General</div>
<div class="t" style="left:588.50px;top:75px;font-size:11.6px;line-height:11.6px;font-weight:normal;color:#3a3a3a;letter-spacing:0.324px;">Conditional Formatting</div>
<div class="t" style="left:588.50px;top:98px;font-size:11.6px;line-height:11.6px;font-weight:normal;color:#3a3a3a;letter-spacing:-0.084px;">Format as Table</div>
<div class="t" style="left:588.50px;top:121px;font-size:11.6px;line-height:11.6px;font-weight:normal;color:#3a3a3a;letter-spacing:-0.267px;">Cell Styles</div>
<div class="t" style="left:767.40px;top:75px;font-size:11.6px;line-height:11.6px;font-weight:normal;color:#3a3a3a;letter-spacing:-0.095px;">Insert</div>
<div class="t" style="left:768.40px;top:98px;font-size:11.6px;line-height:11.6px;font-weight:normal;color:#3a3a3a;letter-spacing:-0.133px;">Delete</div>
<div class="t" style="left:768.40px;top:121px;font-size:11.6px;line-height:11.6px;font-weight:normal;color:#3a3a3a;letter-spacing:-0.039px;">Format</div>
<div class="t" style="left:13.60px;top:180.5px;font-size:12.5px;line-height:12.5px;font-weight:normal;color:#262626;letter-spacing:0.000px;">M3</div>
<div class="t" style="left:111.50px;top:214px;font-size:12.5px;line-height:12.5px;font-weight:normal;color:#262626;letter-spacing:0.000px;-webkit-text-stroke:0.3px #262626">A</div>
<div class="t" style="left:252.50px;top:214px;font-size:12.5px;line-height:12.5px;font-weight:normal;color:#262626;letter-spacing:0.000px;-webkit-text-stroke:0.3px #262626">B</div>
<div class="t" style="left:359.50px;top:214px;font-size:12.5px;line-height:12.5px;font-weight:normal;color:#262626;letter-spacing:0.000px;-webkit-text-stroke:0.3px #262626">C</div>
<div class="t" style="left:483.50px;top:214px;font-size:12.5px;line-height:12.5px;font-weight:normal;color:#262626;letter-spacing:0.000px;-webkit-text-stroke:0.3px #262626">D</div>
<div class="t" style="left:629.00px;top:214px;font-size:12.5px;line-height:12.5px;font-weight:normal;color:#262626;letter-spacing:0.000px;-webkit-text-stroke:0.3px #262626">E</div>
<div class="t" style="left:751.50px;top:214px;font-size:12.5px;line-height:12.5px;font-weight:normal;color:#262626;letter-spacing:0.000px;-webkit-text-stroke:0.3px #262626">F</div>
<div class="t" style="left:860.00px;top:214px;font-size:12.5px;line-height:12.5px;font-weight:normal;color:#262626;letter-spacing:0.000px;-webkit-text-stroke:0.3px #262626">G</div>
<div class="t" style="left:951.60px;top:214px;font-size:12.5px;line-height:12.5px;font-weight:normal;color:#262626;letter-spacing:0.000px;-webkit-text-stroke:0.3px #262626">H</div>
<div class="t" style="left:11.00px;top:252px;font-size:12.5px;line-height:12.5px;font-weight:normal;color:#262626;letter-spacing:0.000px;-webkit-text-stroke:0.3px #262626">1</div>
<div class="t" style="left:11.00px;top:367px;font-size:12.5px;line-height:12.5px;font-weight:normal;color:#262626;letter-spacing:0.000px;-webkit-text-stroke:0.3px #262626">2</div>
<div class="t" style="left:11.00px;top:482px;font-size:12.5px;line-height:12.5px;font-weight:normal;color:#217346;letter-spacing:0.000px;-webkit-text-stroke:0.3px #217346">3</div>
<div class="t" style="left:30.00px;top:250px;font-size:14.7px;line-height:14.7px;font-weight:normal;color:#000000;letter-spacing:-0.204px;">Activity Date</div>
<div class="t" style="left:206.00px;top:250px;font-size:14.7px;line-height:14.7px;font-weight:normal;color:#000000;letter-spacing:0.000px;">Created By</div>
<div class="t" style="left:311.00px;top:250px;font-size:14.7px;line-height:14.7px;font-weight:normal;color:#000000;letter-spacing:0.000px;">Document Id</div>
<div class="t" style="left:419.50px;top:250px;font-size:14.7px;line-height:14.7px;font-weight:normal;color:#000000;letter-spacing:0.000px;">Document Name</div>
<div class="t" style="left:560.50px;top:250px;font-size:14.7px;line-height:14.7px;font-weight:normal;color:#000000;letter-spacing:0.000px;">Index Path</div>
<div class="t" style="left:709.50px;top:250px;font-size:14.7px;line-height:14.7px;font-weight:normal;color:#000000;letter-spacing:-0.081px;">Activity Type</div>
<div class="t" style="left:805.70px;top:231px;font-size:14.7px;line-height:14.7px;font-weight:normal;color:#000000;letter-spacing:-0.123px;">Activity Related</div>
<div class="t" style="left:804.90px;top:250px;font-size:14.7px;line-height:14.7px;font-weight:normal;color:#000000;letter-spacing:0.000px;">Data</div>
<div class="t" style="left:67.00px;top:365px;font-size:14.7px;line-height:14.7px;font-weight:normal;color:#000000;letter-spacing:-0.179px;">2025-02-04 01:35:27</div>
<div class="t" style="left:312.30px;top:365px;font-size:14.7px;line-height:14.7px;font-weight:normal;color:#000000;letter-spacing:-0.302px;">2644554</div>
<div class="t" style="left:421.00px;top:346px;font-size:14.7px;line-height:14.7px;font-weight:normal;color:#000000;letter-spacing:-0.183px;">Training001_RegSu</div>
<div class="t" style="left:421.00px;top:365px;font-size:14.7px;line-height:14.7px;font-weight:normal;color:#000000;letter-spacing:-0.196px;">bmsn_12Nov2024</div>
<div class="t" style="left:561.60px;top:289px;font-size:14.7px;line-height:14.7px;font-weight:normal;color:#000000;letter-spacing:-0.180px;">Trial\03</div>
<div class="t" style="left:560.60px;top:308px;font-size:14.7px;line-height:14.7px;font-weight:normal;color:#000000;letter-spacing:-0.081px;">Regulatory\03.01 Trial</div>
<div class="t" style="left:561.60px;top:327px;font-size:14.7px;line-height:14.7px;font-weight:normal;color:#000000;letter-spacing:-0.316px;">Approval\03.01.01</div>
<div class="t" style="left:560.60px;top:346px;font-size:14.7px;line-height:14.7px;font-weight:normal;color:#000000;letter-spacing:-0.187px;">Regulatory</div>
<div class="t" style="left:561.60px;top:365px;font-size:14.7px;line-height:14.7px;font-weight:normal;color:#000000;letter-spacing:-0.006px;">Submission</div>
<div class="t" style="left:710.40px;top:327px;font-size:14.7px;line-height:14.7px;font-weight:normal;color:#000000;letter-spacing:-0.054px;">Open</div>
<div class="t" style="left:709.40px;top:346px;font-size:14.7px;line-height:14.7px;font-weight:normal;color:#000000;letter-spacing:0.163px;">Document</div>
<div class="t" style="left:709.40px;top:365px;font-size:14.7px;line-height:14.7px;font-weight:normal;color:#000000;letter-spacing:-0.367px;">Metadata</div>
<div class="t" style="left:67.80px;top:480px;font-size:14.7px;line-height:14.7px;font-weight:normal;color:#000000;letter-spacing:-0.223px;">2025-02-04 01:35:21</div>
<div class="t" style="left:312.30px;top:480px;font-size:14.7px;line-height:14.7px;font-weight:normal;color:#000000;letter-spacing:-0.302px;">2644554</div>
<div class="t" style="left:421.00px;top:461px;font-size:14.7px;line-height:14.7px;font-weight:normal;color:#000000;letter-spacing:-0.183px;">Training001_RegSu</div>
<div class="t" style="left:421.00px;top:480px;font-size:14.7px;line-height:14.7px;font-weight:normal;color:#000000;letter-spacing:-0.196px;">bmsn_12Nov2024</div>
<div class="t" style="left:561.60px;top:404px;font-size:14.7px;line-height:14.7px;font-weight:normal;color:#000000;letter-spacing:-0.180px;">Trial\03</div>
<div class="t" style="left:560.60px;top:423px;font-size:14.7px;line-height:14.7px;font-weight:normal;color:#000000;letter-spacing:-0.081px;">Regulatory\03.01 Trial</div>
<div class="t" style="left:561.60px;top:442px;font-size:14.7px;line-height:14.7px;font-weight:normal;color:#000000;letter-spacing:-0.316px;">Approval\03.01.01</div>
<div class="t" style="left:560.60px;top:461px;font-size:14.7px;line-height:14.7px;font-weight:normal;color:#000000;letter-spacing:-0.187px;">Regulatory</div>
<div class="t" style="left:561.60px;top:480px;font-size:14.7px;line-height:14.7px;font-weight:normal;color:#000000;letter-spacing:-0.006px;">Submission</div>
<div class="t" style="left:710.40px;top:442px;font-size:14.7px;line-height:14.7px;font-weight:normal;color:#000000;letter-spacing:-0.054px;">Open</div>
<div class="t" style="left:709.40px;top:461px;font-size:14.7px;line-height:14.7px;font-weight:normal;color:#000000;letter-spacing:0.163px;">Document</div>
<div class="t" style="left:709.40px;top:480px;font-size:14.7px;line-height:14.7px;font-weight:normal;color:#000000;letter-spacing:-0.367px;">Metadata</div>
<div class="t" style="left:561.60px;top:519px;font-size:14.7px;line-height:14.7px;font-weight:normal;color:#000000;letter-spacing:-0.180px;">Trial\03</div>
<div class="t" style="left:560.60px;top:538px;font-size:14.7px;line-height:14.7px;font-weight:normal;color:#000000;letter-spacing:-0.081px;clip-path:inset(0 0 -1.5px 0)">Regulatory\03.01 Trial</div>
<div class="t" style="left:120.20px;top:562px;font-size:12px;line-height:12px;font-weight:normal;color:#444444;letter-spacing:0.437px;">Document Audit Trail_Header</div>
<div class="t" style="left:321.70px;top:562px;font-size:12px;line-height:12px;font-weight:bold;color:#217346;letter-spacing:0.666px;">Document Audit Trail</div>
<div class="t" style="left:10.50px;top:587px;font-size:11.5px;line-height:11.5px;font-weight:normal;color:#444444;letter-spacing:-0.748px;">Ready</div>
<div class="t" style="left:950.50px;top:587px;font-size:12px;line-height:12px;font-weight:normal;color:#444444;letter-spacing:-1.607px;">100%</div>
<div class="t" style="left:280.00px;top:79.5px;font-size:16px;line-height:16px;font-weight:normal;color:#3a3a3a;letter-spacing:0.000px;">A</div>
<div class="t" style="left:305.70px;top:82.5px;font-size:12.5px;line-height:12.5px;font-weight:normal;color:#3a3a3a;letter-spacing:0.000px;">A</div>
<div class="t" style="left:113.30px;top:113px;font-size:14px;line-height:14px;font-weight:bold;color:#3a3a3a;letter-spacing:0.000px;">B</div>
<div class="t" style="left:137.00px;top:113px;font-size:14px;line-height:14px;font-weight:normal;color:#3a3a3a;letter-spacing:0.000px;font-style:italic;font-family:'Liberation Serif'">I</div>
<div class="t" style="left:158.60px;top:114px;font-size:13.5px;line-height:13.5px;font-weight:normal;color:#3a3a3a;letter-spacing:0.000px;">U</div>
<div class="t" style="left:291.60px;top:112px;font-size:14px;line-height:14px;font-weight:normal;color:#3a3a3a;letter-spacing:0.000px;">A</div>
<div class="t" style="left:416.60px;top:72.5px;font-size:9.8px;line-height:9.8px;font-weight:normal;color:#333;letter-spacing:0.000px;">ab</div>
<div class="t" style="left:416.20px;top:79.5px;font-size:9.8px;line-height:9.8px;font-weight:normal;color:#333;letter-spacing:0.000px;">c</div>
<div class="t" style="left:398.00px;top:121px;font-size:10.5px;line-height:10.5px;font-weight:normal;color:#333;letter-spacing:0.000px;transform:rotate(-45deg);transform-origin:3px 9px">ab</div>
<div class="t" style="left:471.80px;top:97px;font-size:16.5px;line-height:16.5px;font-weight:normal;color:#505050;letter-spacing:0.000px;">$</div>
<div class="t" style="left:507.50px;top:97.6px;font-size:16.5px;line-height:16.5px;font-weight:normal;color:#4a4a4a;letter-spacing:0.000px;">%</div>
<div class="t" style="left:881.20px;top:71.5px;font-size:8.5px;line-height:8.5px;font-weight:bold;color:#1e88d8;letter-spacing:0.000px;">A</div>
<div class="t" style="left:881.20px;top:79.7px;font-size:9px;line-height:9px;font-weight:normal;color:#333;letter-spacing:0.000px;-webkit-text-stroke:0.3px #333">Z</div>
<div class="t" style="left:225.00px;top:178.5px;font-size:13px;line-height:13px;font-weight:bold;color:#555;letter-spacing:0.000px;font-style:italic;font-family:'Liberation Serif'">f</div>
<div class="t" style="left:229.50px;top:182px;font-size:11px;line-height:11px;font-weight:bold;color:#555;letter-spacing:0.000px;font-style:italic;font-family:'Liberation Serif'">x</div>
<div class="a" style="left:203px;top:364px;width:77px;height:16px;background:linear-gradient(90deg,#c9c9c9,#e3e3e3)"></div>
<div class="a" style="left:206px;top:480px;width:79px;height:14px;background:linear-gradient(90deg,#c6c6c6,#e6e6e6)"></div>
<div class="a" style="left:0;top:0;width:2px;height:606px;background:linear-gradient(90deg,#0a0a0a 50%,#1f6b40 50%)"></div>
<div class="a" style="left:996px;top:0;width:2px;height:606px;background:linear-gradient(90deg,#1f6b40 50%,#0a0a0a 50%)"></div>
<div class="a" style="left:0;top:604px;width:998px;height:2px;background:linear-gradient(180deg,#1f6b40 50%,#0a0a0a 50%)"></div>
<div class="a" style="left:0;top:0;width:998px;height:1px;background:#0b0b0b"></div>
</body></html>
